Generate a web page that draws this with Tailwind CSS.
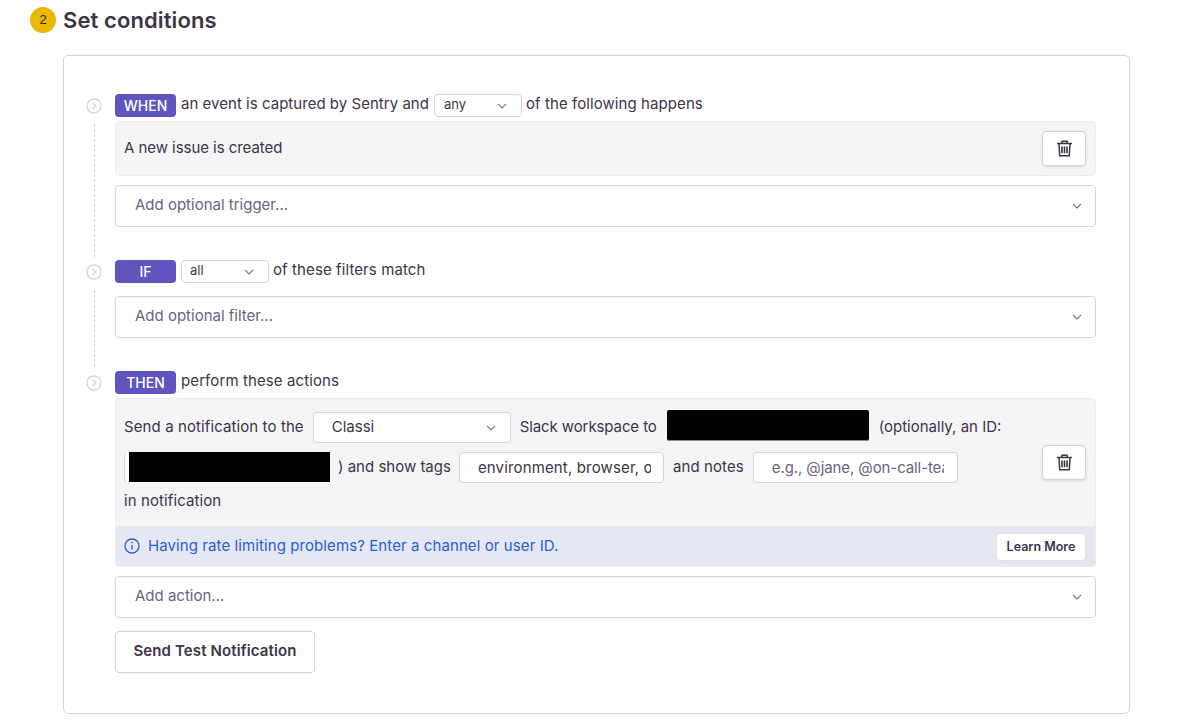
<!DOCTYPE html>
<html lang="en">
<head>
<meta charset="UTF-8">
<title>Set conditions</title>
<script src="https://cdn.jsdelivr.net/npm/@tailwindcss/browser@4"></script>
</head>
<body class="bg-white font-['Inter',sans-serif] text-[#3e3446] text-[15px] overflow-hidden h-[724px]">
  <div class="pt-[7px] pl-[30px] pr-[56px]">
    <div class="flex items-center gap-[7px] mb-[22px]">
      <div class="w-[26px] h-[26px] rounded-full bg-[#ebb800] flex items-center justify-center text-[13px] text-[#2b2233] font-['Liberation_Sans',sans-serif]">2</div>
      <h2 class="text-[22px] leading-[26px] font-semibold tracking-[0.1px]">Set conditions</h2>
    </div>

    <div class="ml-[33px] border border-[#d8d3de] rounded-[5px] pt-[38px] pb-[40px] pl-[22px] pr-[33px]">
      <!-- when -->
      <div class="flex gap-[13px] h-[166px]">
        <div class="w-[16px] shrink-0 flex flex-col items-center pt-[4px] pb-[3px]">
          <svg class="w-[16px] h-[16px] shrink-0" viewBox="0 0 16 16" fill="none" stroke="#d6d1dc" stroke-width="1.3"><circle cx="8" cy="8" r="7"/><path d="M6.6 4.8 9.8 8l-3.2 3.2"/></svg>
          <div class="mt-[10px] flex-1 border-l border-dashed border-[#d8d3de]"></div>
        </div>
        <div class="flex-1 min-w-0">
          <div class="flex items-center h-[23px] mb-[4px]">
            <span class="w-[61px] h-[23px] pb-[1px] rounded-[4px] bg-[#6054bf] text-white font-medium text-[14px] flex items-center justify-center mr-[5px]">WHEN</span>
            <span class="pb-[2px] tracking-[0.03px]">an event is captured by Sentry and</span>
            <div class="ml-[5px] mr-[4px] w-[88px] h-[23px] bg-white border border-[#d8d3de] rounded-[4px] flex items-center justify-between pl-[9px] pr-[13px] text-[13px]">
              <span class="pb-[2px]">any</span>
              <svg class="w-[12px] h-[12px]" viewBox="0 0 12 12" fill="none" stroke="#80708f" stroke-width="1.1"><path d="M2 4l4 4 4-4"/></svg>
            </div>
            <span class="pb-[2px] tracking-[0.08px]">of the following happens</span>
          </div>
          <div class="h-[55px] bg-[#f5f5f8] border border-[#eeecf1] rounded-[4px] flex items-center justify-between pl-[8px] pr-[9px]">
            <span class="tracking-[-0.05px]">A new issue is created</span>
            <button class="w-[44px] h-[35px] bg-white border border-[#d8d3de] rounded-[4px] shadow-sm flex items-center justify-center">
              <svg class="w-[17px] h-[17px] ml-[1px]" viewBox="0 0 16 16" fill="none" stroke="#3e3446" stroke-width="1.4"><path d="M1 3.4h14M5.6 3.2V1.2h4.8v2M2.8 3.6l.7 11.2h9l.7-11.2"/><path stroke-width="1.5" d="M5.6 6v6.4M8 6v6.4M10.4 6v6.4"/></svg>
            </button>
          </div>
          <div class="mt-[9px] h-[42px] bg-white border border-[#d8d3de] rounded-[4px] flex items-center justify-between pl-[19px] pr-[12px] text-[#6f5f80]">
            <span class="pb-[2px]">Add optional trigger...</span>
            <svg class="w-[12px] h-[12px]" viewBox="0 0 12 12" fill="none" stroke="#80708f" stroke-width="1.1"><path d="M2 4l4 4 4-4"/></svg>
          </div>
        </div>
      </div>

      <!-- if -->
      <div class="flex gap-[13px] h-[111px]">
        <div class="w-[16px] shrink-0 flex flex-col items-center pt-[4px] pb-[4px]">
          <svg class="w-[16px] h-[16px] shrink-0" viewBox="0 0 16 16" fill="none" stroke="#d6d1dc" stroke-width="1.3"><circle cx="8" cy="8" r="7"/><path d="M6.6 4.8 9.8 8l-3.2 3.2"/></svg>
          <div class="mt-[10px] flex-1 border-l border-dashed border-[#d8d3de]"></div>
        </div>
        <div class="flex-1 min-w-0">
          <div class="flex items-center h-[23px] mb-[13px]">
            <span class="w-[61px] h-[23px] pb-[1px] rounded-[4px] bg-[#6054bf] text-white font-medium text-[14px] flex items-center justify-center mr-[5px]">IF</span>
            <div class="mr-[4px] w-[88px] h-[23px] bg-white border border-[#d8d3de] rounded-[4px] flex items-center justify-between pl-[8px] pr-[13px] text-[13px]">
              <span class="pb-[2px]">all</span>
              <svg class="w-[12px] h-[12px]" viewBox="0 0 12 12" fill="none" stroke="#80708f" stroke-width="1.1"><path d="M2 4l4 4 4-4"/></svg>
            </div>
            <span class="pb-[2px] tracking-[0.1px]">of these filters match</span>
          </div>
          <div class="h-[42px] bg-white border border-[#d8d3de] rounded-[4px] flex items-center justify-between pl-[19px] pr-[12px] text-[#6f5f80]">
            <span class="pb-[2px]">Add optional filter...</span>
            <svg class="w-[12px] h-[12px]" viewBox="0 0 12 12" fill="none" stroke="#80708f" stroke-width="1.1"><path d="M2 4l4 4 4-4"/></svg>
          </div>
        </div>
      </div>

      <!-- then -->
      <div class="flex gap-[13px]">
        <div class="w-[16px] shrink-0 pt-[4px]">
          <svg class="w-[16px] h-[16px]" viewBox="0 0 16 16" fill="none" stroke="#d6d1dc" stroke-width="1.3"><circle cx="8" cy="8" r="7"/><path d="M6.6 4.8 9.8 8l-3.2 3.2"/></svg>
        </div>
        <div class="flex-1 min-w-0">
          <div class="flex items-center h-[23px] mb-[4px]">
            <span class="w-[61px] h-[23px] pb-[1px] rounded-[4px] bg-[#6054bf] text-white font-medium text-[14px] flex items-center justify-center mr-[5px]">THEN</span>
            <span class="pb-[2px] tracking-[0.1px]">perform these actions</span>
          </div>
          <div class="bg-[#f5f5f8] border border-[#eeecf1] rounded-[4px] overflow-hidden">
            <div class="h-[127px] flex items-center pl-[8px] pr-[9px]">
              <div class="flex-1 self-start mt-[13px] flex flex-wrap items-center gap-x-[9px] gap-y-[9px]">
                <span class="h-[31px] leading-[30px] tracking-[0.1px]">Send a notification to the</span>
                <div class="w-[198px] h-[31px] bg-white border border-[#d8d3de] rounded-[4px] flex items-center justify-between pl-[18px] pr-[13px]">
                  <span class="pb-[1px]">Classi</span>
                  <svg class="w-[12px] h-[12px]" viewBox="0 0 12 12" fill="none" stroke="#80708f" stroke-width="1.1"><path d="M2 4l4 4 4-4"/></svg>
                </div>
                <span class="pb-[1px] tracking-[-0.1px]">Slack workspace to</span>
                <div class="w-[202px] h-[31px] -mt-[4px] mx-[1px] bg-black rounded-[2px] border-b border-[#8a8a8a]"></div>
                <span class="pb-[1px]">(optionally, an ID:</span>
                <div class="w-[206px] h-[31px] pl-[4px] bg-white border-l border-[#d8d3de] rounded-l-[4px]"><div class="h-[30px] bg-black"></div></div>
                <span class="-ml-[1px] -mr-[1px] pb-[1px]">) and show tags</span>
                <input class="w-[205px] h-[31px] bg-white border border-[#d8d3de] rounded-[4px] pl-[18px] pr-[12px] tracking-[0.15px] text-[#3e3446]" value="environment, browser, os">
                <span class="pb-[1px] tracking-[0.1px]">and notes</span>
                <input class="w-[205px] h-[31px] bg-white border border-[#d8d3de] rounded-[4px] pl-[18px] pr-[13px] tracking-[-0.1px] placeholder:text-[#6f5f80]" placeholder="e.g., @jane, @on-call-team">
                <span class="basis-full leading-[18px] tracking-[0.1px]">in notification</span>
              </div>
              <button class="shrink-0 w-[44px] h-[35px] bg-white border border-[#d8d3de] rounded-[4px] shadow-sm flex items-center justify-center">
                <svg class="w-[17px] h-[17px] ml-[1px]" viewBox="0 0 16 16" fill="none" stroke="#3e3446" stroke-width="1.4"><path d="M1 3.4h14M5.6 3.2V1.2h4.8v2M2.8 3.6l.7 11.2h9l.7-11.2"/><path stroke-width="1.5" d="M5.6 6v6.4M8 6v6.4M10.4 6v6.4"/></svg>
              </button>
            </div>
            <div class="h-[40px] bg-[#e5e8f3] flex items-center justify-between pl-[8px] pr-[9px] text-[#2562d4]">
              <div class="flex items-center gap-[8px]">
                <svg class="w-[16px] h-[16px]" viewBox="0 0 16 16" fill="none" stroke="#2562d4" stroke-width="1.3"><circle cx="8" cy="8" r="7"/><path d="M8 7v4.6"/><circle cx="8" cy="4.6" r=".5" fill="#2562d4" stroke-width=".6"/></svg>
                <span class="tracking-[0.09px]">Having rate limiting problems? Enter a channel or user ID.</span>
              </div>
              <button class="w-[90px] h-[28px] mt-[2px] bg-white border border-[#e3e0e8] rounded-[4px] text-[12.5px] font-semibold text-[#3e3446]">Learn More</button>
            </div>
          </div>
          <div class="mt-[9px] h-[42px] bg-white border border-[#d8d3de] rounded-[4px] flex items-center justify-between pl-[19px] pr-[12px] text-[#6f5f80]">
            <span class="pb-[2px]">Add action...</span>
            <svg class="w-[12px] h-[12px]" viewBox="0 0 12 12" fill="none" stroke="#80708f" stroke-width="1.1"><path d="M2 4l4 4 4-4"/></svg>
          </div>
          <button class="block mt-[13px] w-[200px] h-[42px] pb-[2px] bg-white border border-[#d8d3de] rounded-[4px] font-semibold text-[#3e3446] text-[15px] tracking-[0.12px]">Send Test Notification</button>
        </div>
      </div>
    </div>
  </div>
</body>
</html>
